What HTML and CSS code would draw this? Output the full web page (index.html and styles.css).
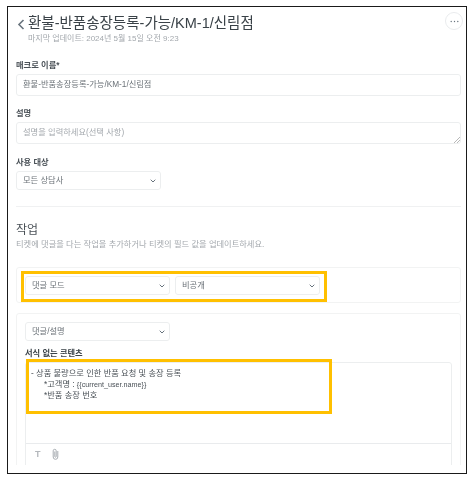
FILE: index.html
```html
<!DOCTYPE html>
<html lang="ko">
<head>
<meta charset="utf-8">
<title>매크로</title>
<link rel="stylesheet" href="styles.css">
</head>
<body>
<main class="frame">
  <div class="content">
    <header class="head">
      <svg class="back" width="8" height="11" viewBox="0 0 8 11"><path d="M6.500 1 2 5.500 6.500 10" fill="none" stroke="#68737d" stroke-width="1.600"/></svg>
      <div class="head-text">
        <h1 class="title">환불-반품송장등록-가능/KM-1/신림점</h1>
        <p class="updated">마지막 업데이트: 2024년 5월 15일 오전 9:23</p>
      </div>
      <div class="more"><svg width="9" height="3" viewBox="0 0 9 3"><circle cx="1.200" cy="1.500" r=".7" fill="#68737d"/><circle cx="4.500" cy="1.500" r=".7" fill="#68737d"/><circle cx="7.800" cy="1.500" r=".7" fill="#68737d"/></svg></div>
    </header>

    <label class="label label-name">매크로 이름*</label>
    <div class="input">환불-반품송장등록-가능/KM-1/신림점</div>

    <label class="label label-desc">설명</label>
    <div class="input placeholder">설명을 입력하세요(선택 사항)
      <svg class="grip" width="6" height="6" viewBox="0 0 6 6"><path d="M0 6 6 0M3 6 6 3" stroke="#999" stroke-width=".7"/></svg>
    </div>

    <label class="label label-target">사용 대상</label>
    <div class="select">모든 상담사<svg class="chev" width="6" height="4" viewBox="0 0 6 4"><path d="M.7.700 3 3 5.300.700" fill="none" stroke="#68737d" stroke-width="1"/></svg></div>

    <hr class="rule">

    <h2 class="section">작업</h2>
    <p class="hint">티켓에 댓글을 다는 작업을 추가하거나 티켓의 필드 값을 업데이트하세요.</p>

    <section class="box box-mode">
      <div class="row">
        <div class="select">댓글 모드<svg class="chev" width="6" height="4" viewBox="0 0 6 4"><path d="M.7.700 3 3 5.300.700" fill="none" stroke="#68737d" stroke-width="1"/></svg></div>
        <div class="select">비공개<svg class="chev" width="6" height="4" viewBox="0 0 6 4"><path d="M.7.700 3 3 5.300.700" fill="none" stroke="#68737d" stroke-width="1"/></svg></div>
      </div>
      <div class="mark mark-mode"></div>
    </section>

    <section class="box box-comment">
      <div class="select">댓글/설명<svg class="chev" width="6" height="4" viewBox="0 0 6 4"><path d="M.7.700 3 3 5.300.700" fill="none" stroke="#68737d" stroke-width="1"/></svg></div>
      <label class="label label-plain">서식 없는 콘텐츠</label>
      <div class="editor">
        <div class="editor-text">
          <p>- 상품 불량으로 인한 반품 요청 및 송장 등록</p>
          <p class="indent">*고객명 : <span class="latin">{{current_user.name}}</span></p>
          <p class="indent">*반품 송장 번호</p>
        </div>
        <div class="toolbar">
          <span class="tool-t">T</span>
          <svg width="7" height="12" viewBox="0 0 7 12"><path d="M5.800 3v6a2.300 2.300 0 0 1-4.600 0V2.800a1.500 1.500 0 0 1 3 0V8.500a.7.700 0 0 1-1.400 0V3.500" fill="none" stroke="#a8adb2" stroke-width="1"/></svg>
        </div>
      </div>
      <div class="mark mark-text"></div>
    </section>
  </div>
</main>
</body>
</html>
```
FILE: styles.css
```css
* { box-sizing: border-box; }
html, body { margin: 0; padding: 0; background: #fff; }
body {
  width: 475px;
  height: 481px;
  overflow: hidden;
  font-family: "Liberation Sans", "Noto Sans CJK KR", sans-serif;
  color: #2f3941;
}
.frame {
  margin: 6px 0 0 7px;
  width: 460px;
  height: 468px;
  border: 1px solid #1a1a1a;
  overflow: hidden;
}
.content {
  height: 458px;
  overflow: hidden;
  padding: 0 5px 0 8px;
  filter: blur(0.3px);
}
.head { display: flex; align-items: flex-start; height: 46px; padding-top: 6px; position: relative; }
.back { margin: 6px 0 0 1px; flex: none; }
.head-text { margin-left: 3px; }
.title { margin: 0; font-size: 14.5px; font-weight: 400; line-height: 20px; color: #3a4248; white-space: nowrap; }
.updated { margin: 0; font-size: 8px; line-height: 12px; color: #a3a8ad; white-space: nowrap; }
.more {
  position: absolute;
  right: -2px;
  top: 5px;
  width: 18px;
  height: 18px;
  border: 1px solid #e9ebed;
  border-radius: 50%;
  display: flex;
  align-items: center;
  justify-content: center;
}
.label { display: block; font-size: 8.25px; font-weight: 700; line-height: 12px; color: #4a5157; }
.label-name { margin-top: 7px; height: 14px; }
.label-desc { margin-top: 12px; height: 14px; }
.label-target { margin-top: 13px; height: 14px; }
.label-plain { margin-top: 7px; height: 12px; color: #3a4248; }
.input {
  position: relative;
  height: 22px;
  border: 1px solid #eceeef;
  border-radius: 3px;
  padding: 0 6px;
  font-size: 8.25px;
  line-height: 20px;
  color: #6b7278;
}
.placeholder { color: #a3a8ad; }
.grip { position: absolute; right: 0; bottom: 0; }
.select {
  position: relative;
  width: 145px;
  height: 19px;
  border: 1px solid #eceeef;
  border-radius: 3px;
  padding: 0 6px;
  font-size: 8.25px;
  line-height: 17px;
  color: #6b7278;
  flex: none;
}
.chev { position: absolute; right: 4px; top: 7px; }
.rule { margin: 16px 0 0; border: 0; border-top: 1px solid #f0f1f2; }
.section { margin: 15px 0 0; font-size: 12px; font-weight: 400; line-height: 16px; color: #4a5157; }
.hint { margin: 1px 0 0; font-size: 8.25px; line-height: 12px; color: #a3a8ad; white-space: nowrap; }
.box { position: relative; border: 1px solid #f2f3f3; border-radius: 3px; padding: 8px; }
.box-mode { margin-top: 16px; height: 36px; }
.box-comment { margin-top: 10px; height: 170px; }
.row { display: flex; gap: 5px; }
.mark { position: absolute; border: 3px solid #ffc000; }
.mark-mode { left: 4px; top: 3px; width: 306px; height: 31px; }
.mark-text { left: 9px; top: 45px; width: 306px; height: 55px; }
.editor { margin-top: 2px; width: 427px; height: 115px; border: 1px solid #eceeef; border-radius: 3px; }
.editor-text { height: 80px; padding: 5px 5px 0; font-size: 8.25px; line-height: 11px; color: #4a5157; }
.editor-text p { margin: 0; }
.editor-text .indent { padding-left: 13px; }
.latin { font-size: 7.2px; }
.toolbar { border-top: 1px solid #e9ebed; height: 32px; display: flex; align-items: center; gap: 11px; padding: 0 9px 11px; }
.tool-t { font-size: 9px; font-weight: 700; line-height: 12px; color: #b4b8bc; }
```
